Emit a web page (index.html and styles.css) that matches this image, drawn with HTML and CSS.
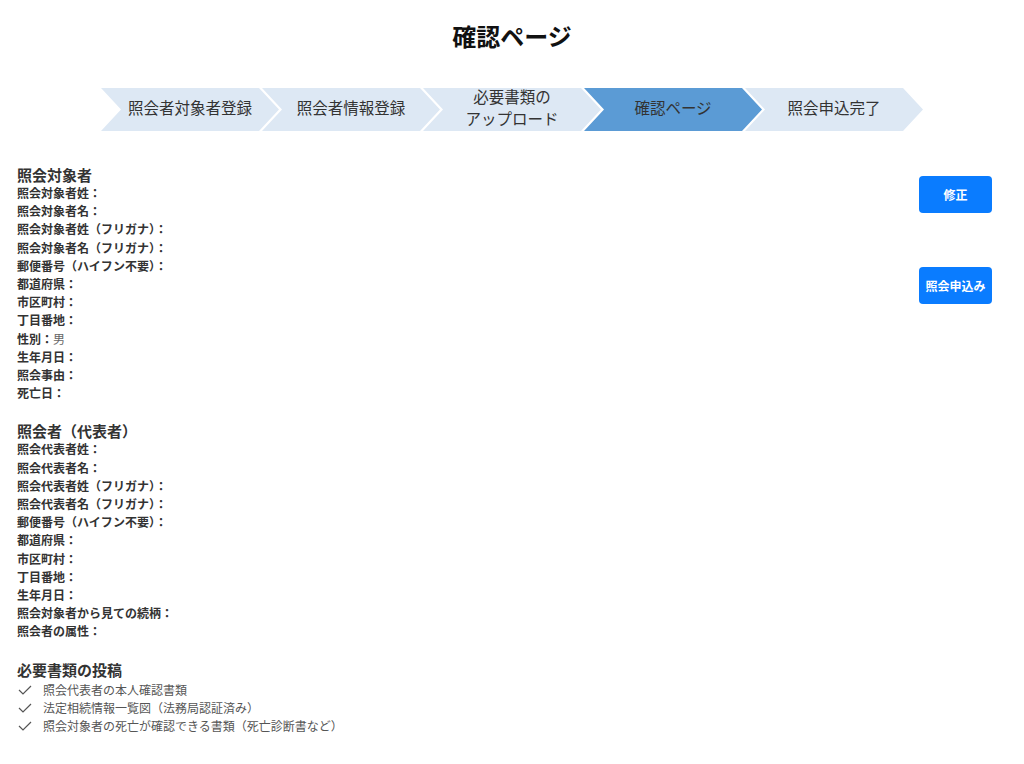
FILE: index.html
```html
<!DOCTYPE html>
<html lang="ja">
<head>
    <meta charset="UTF-8">
    <meta name="viewport" content="width=device-width, initial-scale=1.0">
    <title>確認ページ</title>
    <link rel="stylesheet" href="styles.css">
</head>
<body>
    <h1 class="title">確認ページ</h1>

    <!-- 進捗ステップ -->
    <ol class="steps">
        <li class="step first">照会者対象者登録</li>
        <li class="step">照会者情報登録</li>
        <li class="step">必要書類の<br>アップロード</li>
        <li class="step active">確認ページ</li>
        <li class="step">照会申込完了</li>
    </ol>

    <div class="content">
        <div class="details">
            <section class="group">
                <h2>照会対象者</h2>
                <p>照会対象者姓：</p>
                <p>照会対象者名：</p>
                <p>照会対象者姓（フリガナ）：</p>
                <p>照会対象者名（フリガナ）：</p>
                <p>郵便番号（ハイフン不要）：</p>
                <p>都道府県：</p>
                <p>市区町村：</p>
                <p>丁目番地：</p>
                <p>性別：<span class="value">男</span></p>
                <p>生年月日：</p>
                <p>照会事由：</p>
                <p>死亡日：</p>
            </section>

            <section class="group">
                <h2>照会者（代表者）</h2>
                <p>照会代表者姓：</p>
                <p>照会代表者名：</p>
                <p>照会代表者姓（フリガナ）：</p>
                <p>照会代表者名（フリガナ）：</p>
                <p>郵便番号（ハイフン不要）：</p>
                <p>都道府県：</p>
                <p>市区町村：</p>
                <p>丁目番地：</p>
                <p>生年月日：</p>
                <p>照会対象者から見ての続柄：</p>
                <p>照会者の属性：</p>
            </section>

            <section class="group">
                <h2>必要書類の投稿</h2>
                <ul class="docs">
                    <li><svg class="check" viewBox="0 0 14 10" width="14" height="10"><path d="M1 5l4 4 8-8" fill="none" stroke="#555" stroke-width="1.2"/></svg>照会代表者の本人確認書類</li>
                    <li><svg class="check" viewBox="0 0 14 10" width="14" height="10"><path d="M1 5l4 4 8-8" fill="none" stroke="#555" stroke-width="1.2"/></svg>法定相続情報一覧図（法務局認証済み）</li>
                    <li><svg class="check" viewBox="0 0 14 10" width="14" height="10"><path d="M1 5l4 4 8-8" fill="none" stroke="#555" stroke-width="1.2"/></svg>照会対象者の死亡が確認できる書類（死亡診断書など）</li>
                </ul>
            </section>
        </div>

        <div class="actions">
            <button class="btn">修正</button>
            <button class="btn">照会申込み</button>
        </div>
    </div>
</body>
</html>
```

FILE: styles.css
```css
/* Basic styling */
body {
    margin: 0;
    background-color: #fff;
    color: #333;
    font-family: "Noto Sans CJK JP", "Noto Sans", sans-serif;
}

.title {
    margin: 0;
    padding-top: 20px;
    font-size: 24px;
    line-height: 32px;
    font-weight: 700;
    text-align: center;
    color: #111;
}

/* Steps */
.steps {
    display: flex;
    justify-content: center;
    list-style: none;
    margin: 36px 0 0;
    padding: 0;
}

.step {
    width: 178px;
    height: 43px;
    margin-left: -17px;
    padding-bottom: 5px;
    box-sizing: border-box;
    display: flex;
    align-items: center;
    justify-content: center;
    text-align: center;
    background-color: #dde8f4;
    color: #333;
    font-size: 15.5px;
    font-weight: 400;
    line-height: 22px;
    clip-path: polygon(0 0, calc(100% - 20px) 0, 100% 50%, calc(100% - 20px) 100%, 0 100%, 20px 50%);
}

.step.first {
    margin-left: 0;
}

.step.active {
    background-color: #5b9bd5;
    color: #333;
}

/* Content */
.content {
    display: flex;
    justify-content: space-between;
    margin-top: 35px;
    padding: 0 32px 0 17px;
}

.group {
    margin-bottom: 20px;
}

.group h2 {
    margin: 0;
    font-size: 15px;
    line-height: 18px;
    font-weight: 700;
    color: #333;
}

.group p {
    margin: 0;
    font-size: 12px;
    line-height: 18.2px;
    font-weight: 700;
    color: #333;
}

.value {
    font-weight: 400;
    color: #666;
}

.docs {
    list-style: none;
    margin: 2px 0 0;
    padding: 0;
}

.docs li {
    display: flex;
    align-items: center;
    font-size: 12px;
    line-height: 18px;
    font-weight: 400;
    color: #555;
}

.check {
    margin: 0 11px 0 1px;
}

.actions {
    display: flex;
    flex-direction: column;
    gap: 54px;
    padding-top: 10px;
}

.btn {
    width: 73px;
    height: 37px;
    border: none;
    border-radius: 4px;
    background-color: #0a7cff;
    color: #fff;
    font-family: inherit;
    font-size: 12px;
    font-weight: 700;
    cursor: pointer;
    padding: 0;
}
```
